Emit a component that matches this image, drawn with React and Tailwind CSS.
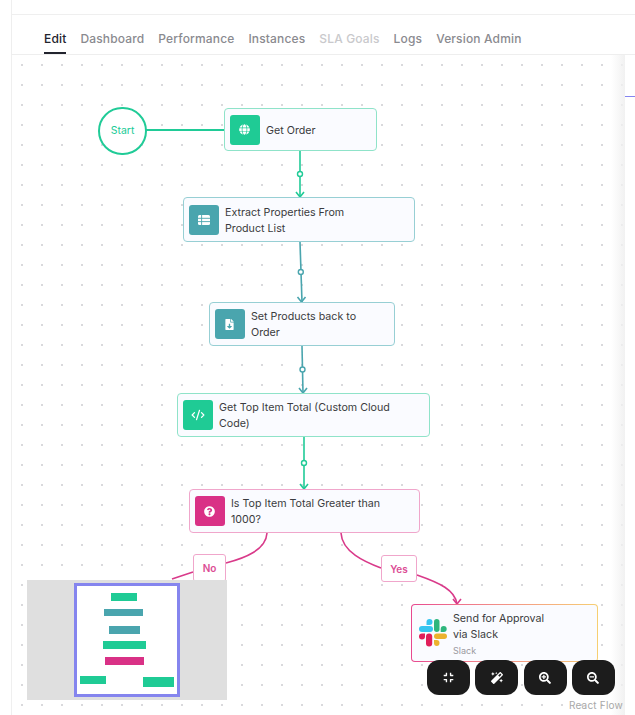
import React from "react";
import { CodeXml } from "lucide-react";
import { FaGlobe, FaFileDownload, FaQuestionCircle, FaCompress, FaMagic, FaSearchPlus, FaSearchMinus } from "react-icons/fa";

const tabs = [
  { label: "Edit", cls: "text-[#22242e] border-b-2 border-[#22242e]" },
  { label: "Dashboard", cls: "text-[#8a8a8f]" },
  { label: "Performance", cls: "text-[#8a8a8f]" },
  { label: "Instances", cls: "text-[#8a8a8f]" },
  { label: "SLA Goals", cls: "text-[#c9c9cc]" },
  { label: "Logs", cls: "text-[#8a8a8f]" },
  { label: "Version Admin", cls: "text-[#8a8a8f]" },
];

const Arrow = ({ x, y, color }) => (
  <path d={`M${x - 4} ${y - 5} L${x} ${y} L${x + 4} ${y - 5}`} fill="none" stroke={color} strokeWidth="1.6" />
);

const Edges = () => (
  <svg className="absolute left-0 top-0" width="635" height="715" viewBox="0 0 635 715" fill="none">
    <path d="M146 130 H224" stroke="#20cb97" strokeWidth="2" />
    <path d="M300 151 V197" stroke="#20cb97" strokeWidth="1.6" />
    <circle cx="300" cy="174" r="2.5" fill="#fff" stroke="#20cb97" strokeWidth="1.4" />
    <Arrow x={300} y={197} color="#20cb97" />
    <path d="M300 242 L302 302" stroke="#4aa5ae" strokeWidth="1.6" />
    <circle cx="300.8" cy="272" r="2.5" fill="#fff" stroke="#4aa5ae" strokeWidth="1.4" />
    <Arrow x={301.5} y={302} color="#4aa5ae" />
    <path d="M302 346 L303 393" stroke="#4aa5ae" strokeWidth="1.6" />
    <circle cx="302.5" cy="369.5" r="2.5" fill="#fff" stroke="#4aa5ae" strokeWidth="1.4" />
    <Arrow x={303} y={393} color="#4aa5ae" />
    <path d="M304 437 V489" stroke="#20cb97" strokeWidth="1.6" />
    <circle cx="304" cy="463" r="2.5" fill="#fff" stroke="#20cb97" strokeWidth="1.4" />
    <Arrow x={304} y={489} color="#20cb97" />
    <path d="M267 533 C266 550 245 558 226 563" stroke="#d93a8a" strokeWidth="1.6" />
    <path d="M193 572 L172 579" stroke="#d93a8a" strokeWidth="1.6" />
    <path d="M341 533 C342 552 365 562 381 568" stroke="#d93a8a" strokeWidth="1.6" />
    <path d="M417 575 C440 583 455 590 457 604" stroke="#d93a8a" strokeWidth="1.6" />
    <Arrow x={457} y={604} color="#d93a8a" />
    <path d="M625 96.5 H635" stroke="#8585f0" strokeWidth="1" />
  </svg>
);

const ListIcon = () => (
  <svg width="12" height="10" viewBox="0 0 12 10">
    <rect width="12" height="10" rx="1.5" fill="#fff" />
    <path d="M3.6 0 V10 M0 3.3 H12 M0 6.6 H12" stroke="#4aa5ae" strokeWidth="0.9" />
  </svg>
);

const FlowNode = ({ box, border, iconBg, icon, children }) => (
  <div className={`absolute flex items-center gap-[6.5px] rounded-[4px] border-[1.5px] bg-[#fafbff] p-[4.5px] ${box} ${border}`}>
    <div className={`flex h-[30px] w-[30px] shrink-0 items-center justify-center rounded-[3px] ${iconBg}`}>{icon}</div>
    <div className="pt-[2px] text-[10.7px] leading-[16px] text-[#3a3b40]">{children}</div>
  </div>
);

const EdgeLabel = ({ box, children }) => (
  <div className={`absolute flex items-start justify-center rounded-[3px] border-[1.5px] border-[#f0a6cb] bg-white pt-[5.5px] text-[10px] font-semibold leading-[14px] text-[#dc4d95] ${box}`}>
    {children}
  </div>
);

const SlackLogo = () => (
  <svg width="28" height="28" viewBox="0 0 28 28">
    <rect x="0" y="7" width="14" height="6" rx="3" fill="#36c5f0" />
    <path d="M7.5 3 a3 3 0 1 1 3 3 h-3 z" fill="#36c5f0" />
    <rect x="15" y="0" width="5.5" height="13" rx="2.75" fill="#2eb67d" />
    <path d="M21.7 10 a3 3 0 1 1 3 3 h-3 z" fill="#2eb67d" />
    <rect x="15" y="14.5" width="13" height="5.5" rx="2.75" fill="#ecb22e" />
    <path d="M15 21 h2.75 a2.75 3 0 1 1 -2.75 3 z" fill="#ecb22e" />
    <rect x="7" y="14.5" width="6.2" height="13" rx="3" fill="#e01e5a" />
    <path d="M6 14.5 v3 a3 3 0 1 1 -3 -3 z" fill="#e01e5a" />
  </svg>
);

const Bar = ({ cls }) => <div className={`absolute ${cls}`} />;

const ControlBtn = ({ children }) => (
  <button className="flex h-[35px] w-[43px] items-center justify-center rounded-[12px] bg-[#1c1c1c] text-white">
    {children}
  </button>
);

export default function App() {
  return (
    <div className="relative h-[715px] w-[635px] overflow-hidden bg-white font-['Inter',sans-serif]">
      <div className="ml-[11px] h-[15px] border-b border-l border-[#efefef]" />
      <div className="ml-[11px] flex h-[40px] items-end gap-[14px] border-b border-l border-[#eeeeee] pl-[32px] text-[12px] font-medium tracking-[0.15px]">
        {tabs.map((t) => (
          <div key={t.label} className={`h-[30px] pt-[6px] ${t.cls}`}>{t.label}</div>
        ))}
      </div>

      {/* canvas */}
      <div className="absolute bottom-0 left-[11px] right-[10px] top-[55px] border-l border-[#efefef] bg-[radial-gradient(#d9d9dc_1px,transparent_1px)] bg-[size:20px_20px] bg-[position:0px_0px]" />
      <div className="absolute bottom-0 right-[10px] top-[55px] w-[14px] bg-gradient-to-r from-transparent to-[#f1f1f1]" />
      <Edges />

      <div className="absolute left-[98px] top-[107px] flex h-[48px] w-[49px] items-center justify-center rounded-full border-2 border-[#20cb97] bg-white text-[10.5px] font-normal text-[#20cb97]">
        Start
      </div>

      <FlowNode box="left-[224px] top-[108px] h-[43px] w-[153px]" border="border-[#8fe3c9]" iconBg="bg-[#1fcb95]" icon={<FaGlobe size={11} color="#fff" />}>
        Get Order
      </FlowNode>
      <FlowNode box="left-[183px] top-[197px] h-[45px] w-[232px]" border="border-[#97cfd4]" iconBg="bg-[#4aa5ae]" icon={<ListIcon />}>
        Extract Properties From<br />Product List
      </FlowNode>
      <FlowNode box="left-[209px] top-[302px] h-[44px] w-[186px]" border="border-[#97cfd4]" iconBg="bg-[#4aa5ae]" icon={<FaFileDownload size={11} color="#fff" />}>
        Set Products back to<br />Order
      </FlowNode>
      <FlowNode box="left-[177px] top-[393px] h-[44px] w-[253px]" border="border-[#8fe3c9]" iconBg="bg-[#1fcb95]" icon={<CodeXml size={14} color="#fff" strokeWidth={2.2} />}>
        Get Top Item Total (Custom Cloud<br />Code)
      </FlowNode>
      <FlowNode box="left-[189px] top-[489px] h-[44px] w-[231px]" border="border-[#f0a6cb]" iconBg="bg-[#d93186]" icon={<FaQuestionCircle size={11} color="#fff" />}>
        Is Top Item Total Greater than<br />1000?
      </FlowNode>

      <EdgeLabel box="left-[193px] top-[554px] h-[28px] w-[33px]">No</EdgeLabel>
      <EdgeLabel box="left-[381px] top-[555px] h-[27px] w-[36px]">Yes</EdgeLabel>

      {/* slack node with gradient border */}
      <div className="absolute left-[411px] top-[604px] h-[58px] w-[187px] rounded-[4px] bg-gradient-to-r from-[#e8488f] to-[#f6cf72] p-px">
        <div className="flex h-full w-full gap-[6px] rounded-[3px] bg-[#fafbff] pl-[7px] pt-[6px]">
          <div className="mt-[8px] shrink-0"><SlackLogo /></div>
          <div className="text-[10.7px] leading-[16px] text-[#3a3b40]">
            Send for Approval<br />via Slack
            <div className="text-[9px] leading-[15px] text-[#9a9aa0]">Slack</div>
          </div>
        </div>
      </div>

      {/* minimap */}
      <div className="absolute left-[27px] top-[580px] h-[120px] w-[200px] bg-[#dfdfdf]">
        <div className="absolute left-[47px] top-[3px] h-[114px] w-[106px] border-[3px] border-[#8585ee] bg-white" />
        <Bar cls="left-[84px] top-[13px] h-[8px] w-[26px] bg-[#1fcb95]" />
        <Bar cls="left-[77px] top-[29px] h-[7px] w-[39px] bg-[#4aa5ae]" />
        <Bar cls="left-[82px] top-[46px] h-[8px] w-[31px] bg-[#4aa5ae]" />
        <Bar cls="left-[76px] top-[61px] h-[8px] w-[43px] bg-[#1fcb95]" />
        <Bar cls="left-[78px] top-[77px] h-[8px] w-[39px] bg-[#d93186]" />
        <Bar cls="left-[53px] top-[96px] h-[8px] w-[26px] bg-[#1fcb95]" />
        <Bar cls="left-[116px] top-[97px] h-[10px] w-[31px] bg-[#1fcb95]" />
      </div>

      {/* controls */}
      <div className="absolute left-[427px] top-[660px] flex gap-[5.3px]">
        <ControlBtn><FaCompress size={11} /></ControlBtn>
        <ControlBtn><FaMagic size={12} /></ControlBtn>
        <ControlBtn><FaSearchPlus size={12} /></ControlBtn>
        <ControlBtn><FaSearchMinus size={12} /></ControlBtn>
      </div>
      <div className="absolute left-[569px] top-[699px] text-[10px] leading-[12px] tracking-[0.2px] text-[#a8a8a8]">React Flow</div>
    </div>
  );
}
